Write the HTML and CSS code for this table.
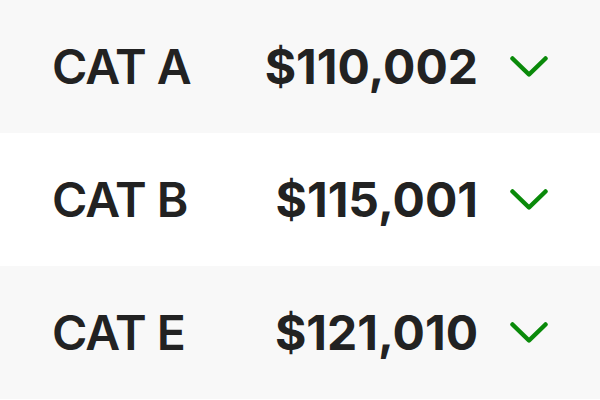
FILE: index.html
```html
<!DOCTYPE html>
<html>
<head>
<meta charset="utf-8">
<link rel="stylesheet" href="styles.css">
</head>
<body>
<div class="list">
  <div class="row alt">
    <span class="label">CAT A</span>
    <span class="amount">$110,002</span>
    <svg class="chev" viewBox="0 0 38 21"><path d="M2.5 2.5 L19 18.5 L35.5 2.5"/></svg>
  </div>
  <div class="row">
    <span class="label">CAT B</span>
    <span class="amount">$115,001</span>
    <svg class="chev" viewBox="0 0 38 21"><path d="M2.5 2.5 L19 18.5 L35.5 2.5"/></svg>
  </div>
  <div class="row alt">
    <span class="label">CAT E</span>
    <span class="amount">$121,010</span>
    <svg class="chev" viewBox="0 0 38 21"><path d="M2.5 2.5 L19 18.5 L35.5 2.5"/></svg>
  </div>
</div>
</body>
</html>
```
FILE: styles.css
```css
html, body { margin: 0; padding: 0; background: #fff; }
body { width: 600px; height: 400px; overflow: hidden; font-family: Inter, "Noto Sans", sans-serif; color: #222; }
.list { display: flex; flex-direction: column; }
.row { height: 133px; display: flex; align-items: center; padding: 0 52px 0 52px; }
.row.alt { background: #f8f8f8; }
.label { flex: 1; font-size: 48px; font-weight: 600; letter-spacing: -1px; }
.amount { font-size: 48px; font-weight: 700; }
.chev { width: 38px; height: 21px; margin-left: 32px; fill: none; stroke: #0a8a0a; stroke-width: 4.5; stroke-linecap: round; stroke-linejoin: round; }
```
